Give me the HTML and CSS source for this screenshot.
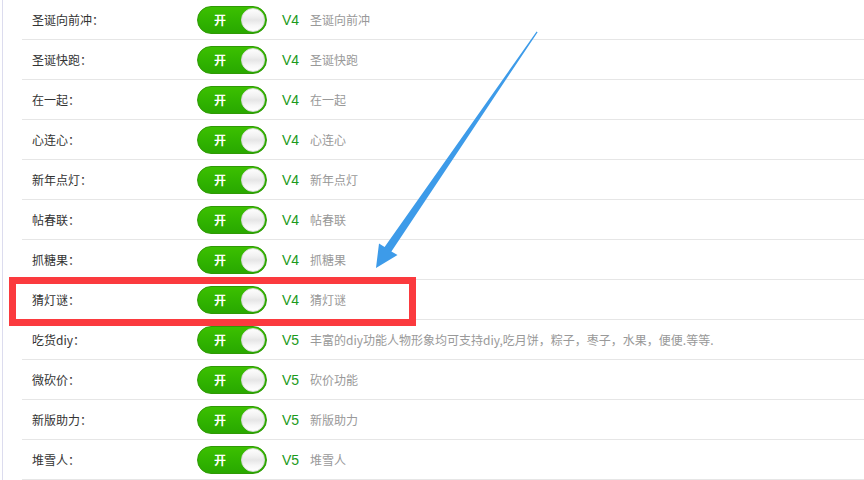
FILE: index.html
```html
<!DOCTYPE html>
<html lang="zh-CN">

<head>
    <meta charset="UTF-8">
    <meta name="viewport" content="width=device-width, initial-scale=1.0">
    <title>插件设置</title>
    <link rel="stylesheet" href="styles.css">
</head>

<body>
    <div class="page">
        <ul class="plugin-list">
            <li class="row">
                <span class="name">圣诞向前冲：</span>
                <span class="switch"><b>开</b><i></i></span>
                <span class="ver">V4</span>
                <span class="desc">圣诞向前冲</span>
            </li>
            <li class="row">
                <span class="name">圣诞快跑：</span>
                <span class="switch"><b>开</b><i></i></span>
                <span class="ver">V4</span>
                <span class="desc">圣诞快跑</span>
            </li>
            <li class="row">
                <span class="name">在一起：</span>
                <span class="switch"><b>开</b><i></i></span>
                <span class="ver">V4</span>
                <span class="desc">在一起</span>
            </li>
            <li class="row">
                <span class="name">心连心：</span>
                <span class="switch"><b>开</b><i></i></span>
                <span class="ver">V4</span>
                <span class="desc">心连心</span>
            </li>
            <li class="row">
                <span class="name">新年点灯：</span>
                <span class="switch"><b>开</b><i></i></span>
                <span class="ver">V4</span>
                <span class="desc">新年点灯</span>
            </li>
            <li class="row">
                <span class="name">帖春联：</span>
                <span class="switch"><b>开</b><i></i></span>
                <span class="ver">V4</span>
                <span class="desc">帖春联</span>
            </li>
            <li class="row">
                <span class="name">抓糖果：</span>
                <span class="switch"><b>开</b><i></i></span>
                <span class="ver">V4</span>
                <span class="desc">抓糖果</span>
            </li>
            <li class="row">
                <span class="name">猜灯谜：</span>
                <span class="switch"><b>开</b><i></i></span>
                <span class="ver">V4</span>
                <span class="desc">猜灯谜</span>
            </li>
            <li class="row">
                <span class="name">吃货diy：</span>
                <span class="switch"><b>开</b><i></i></span>
                <span class="ver">V5</span>
                <span class="desc">丰富的diy功能人物形象均可支持diy,吃月饼，粽子，枣子，水果，便便.等等.</span>
            </li>
            <li class="row">
                <span class="name">微砍价：</span>
                <span class="switch"><b>开</b><i></i></span>
                <span class="ver">V5</span>
                <span class="desc">砍价功能</span>
            </li>
            <li class="row">
                <span class="name">新版助力：</span>
                <span class="switch"><b>开</b><i></i></span>
                <span class="ver">V5</span>
                <span class="desc">新版助力</span>
            </li>
            <li class="row">
                <span class="name">堆雪人：</span>
                <span class="switch"><b>开</b><i></i></span>
                <span class="ver">V5</span>
                <span class="desc">堆雪人</span>
            </li>
        </ul>

        <!-- annotation: highlight box + arrow -->
        <div class="highlight"></div>
        <svg class="arrow" width="864" height="480" viewBox="0 0 864 480">
            <polygon fill="#3d9be9"
                points="536.6,31.4 384.6,247 379,243.5 376,268 397.5,255 391.4,251.6 537.6,32.2" />
        </svg>
    </div>
</body>

</html>
```

FILE: styles.css
```css
body {
    margin: 0;
    background: #fff;
    font-family: "Noto Sans CJK SC", "Liberation Sans", sans-serif;
    font-size: 12px;
    color: #333;
    overflow: hidden;
}

.page {
    position: relative;
    height: 480px;
    margin-left: 2px;
    border-left: 1px solid #dcdcee;
}

.plugin-list {
    list-style: none;
    margin: 0 0 0 19px;
    padding: 0;
}

.row {
    display: flex;
    align-items: center;
    height: 39px;
    padding-left: 10px;
    border-bottom: 1px solid #e6e6e6;
}

.name {
    width: 165px;
    flex-shrink: 0;
    font-family: "Noto Sans CJK TC", "Noto Sans CJK SC", sans-serif;
}

.switch {
    position: relative;
    display: flex;
    align-items: center;
    width: 70px;
    height: 28px;
    box-sizing: border-box;
    border-radius: 14px;
    border: 1px solid #2f9a05;
    background: linear-gradient(#3cc000, #2fb200 60%, #29a800);
    flex-shrink: 0;
}

.switch b {
    color: #fff;
    font-weight: bold;
    font-size: 12px;
    margin-left: 16px;
}

.switch i {
    position: absolute;
    right: 1px;
    top: 1px;
    width: 24px;
    height: 24px;
    box-sizing: border-box;
    border-radius: 50%;
    border: 1px solid #d8d8d8;
    background: linear-gradient(#fdfdfd 0%, #f2f2f2 30%, #e6e6e6 50%, #f6f6f6 75%, #fff 100%);
}

.ver {
    width: 28px;
    margin-left: 15px;
    flex-shrink: 0;
    color: #1b9a1b;
    font-family: "Liberation Sans", Arial, sans-serif;
    font-size: 14px;
}

.desc {
    color: #999;
    white-space: nowrap;
}

.highlight {
    position: absolute;
    left: 6px;
    top: 277px;
    width: 407px;
    height: 49px;
    box-sizing: border-box;
    border: 7px solid #fb3a3e;
}

.arrow {
    position: absolute;
    left: -3px;
    top: 0;
}
```
